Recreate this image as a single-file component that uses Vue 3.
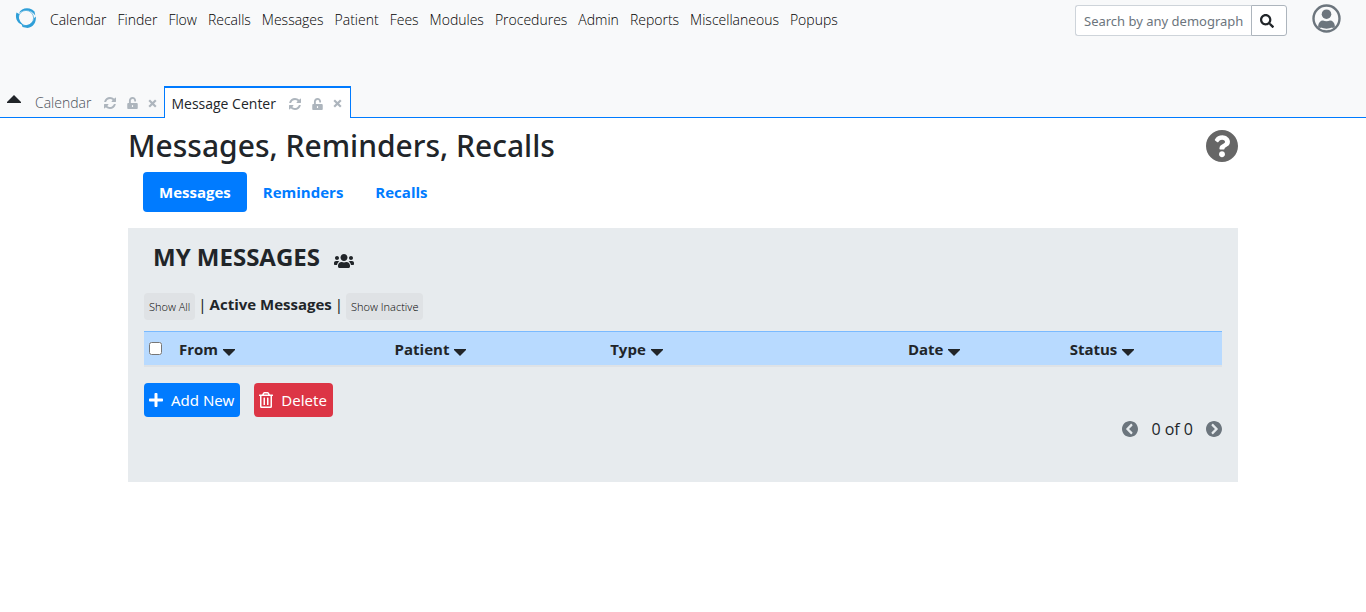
<script setup>
import { ref } from 'vue'

const menu = ['Calendar', 'Finder', 'Flow', 'Recalls', 'Messages', 'Patient', 'Fees', 'Modules', 'Procedures', 'Admin', 'Reports', 'Miscellaneous', 'Popups']
const tabs = [
  { title: 'Calendar', active: false },
  { title: 'Message Center', active: true },
]
const pills = ['Messages', 'Reminders', 'Recalls']
const activePill = ref('Messages')
const columns = [
  { title: 'From', key: 'from' },
  { title: 'Patient', key: 'patient' },
  { title: 'Type', key: 'type' },
  { title: 'Date', key: 'date' },
  { title: 'Status', key: 'status' },
]
const query = ref('')
</script>

<template>
  <div class="page">
    <header class="top">
      <nav class="menu" aria-label="Main">
        <a class="logo" href="#" aria-label="Home">
          <svg width="22" height="22" viewBox="0 0 22 22" aria-hidden="true">
            <circle cx="11" cy="11" r="7.6" fill="none" stroke="#74bfe5" stroke-width="1" />
            <path d="M4 6C6 1.500 12 0 17 2.500L19.500 4.500L20.300 8.500C17.500 4 12 1.600 7 4.200Z" fill="#2f9fd8" />
            <path d="M1.500 5.500C-.5 12 3 17.500 9 18.200C4.700 15 3 11.500 4.200 7Z" fill="#2f9fd8" />
            <path d="M20.800 9.500C21.500 15.500 18 20.500 12.500 21L7.500 20L6.800 17.800C12.500 19.600 18 16.500 19.200 11Z" fill="#2f9fd8" />
          </svg>
        </a>
        <a v-for="item in menu" :key="item" href="#">{{ item }}</a>
      </nav>
      <div class="tools">
        <form class="search" @submit.prevent>
          <input v-model="query" type="text" placeholder="Search by any demographics" aria-label="Search by any demographics" />
          <button type="submit" aria-label="Search">
            <svg width="14" height="14" viewBox="0 0 512 512" aria-hidden="true"><path fill="currentColor" d="M505 442.700L405.300 343c-4.500-4.500-10.600-7-17-7H372c27.600-35.300 44-79.700 44-128C416 93.100 322.900 0 208 0S0 93.100 0 208s93.100 208 208 208c48.300 0 92.700-16.400 128-44v16.300c0 6.400 2.500 12.500 7 17l99.700 99.700c9.400 9.400 24.600 9.400 33.900 0l28.300-28.300c9.400-9.400 9.400-24.600.1-34zM208 336c-70.700 0-128-57.200-128-128 0-70.700 57.200-128 128-128 70.700 0 128 57.200 128 128 0 70.700-57.200 128-128 128z" /></svg>
          </button>
        </form>
        <button class="user" type="button" aria-label="User">
          <svg width="29" height="29" viewBox="0 0 29 29" aria-hidden="true">
            <circle cx="14.500" cy="14.500" r="13" fill="none" stroke="currentColor" stroke-width="2.400" />
            <circle cx="14.500" cy="10.200" r="4.800" fill="currentColor" />
            <path d="M6 22.500C6.500 18.500 8.500 16.600 11 16.600C13 17.500 16 17.500 18 16.600C20.500 16.600 22.500 18.500 23 22.500C18.500 27 10.500 27 6 22.500Z" fill="currentColor" />
            <path d="M8.500 24.200Q14.500 26.500 20.500 24.200" fill="none" stroke="#f8f9fa" stroke-width="1.400" />
          </svg>
        </button>
      </div>
    </header>

    <div class="tabs">
      <button class="collapse" type="button" aria-label="Collapse">
        <svg width="14" height="8" viewBox="0 0 14 8" aria-hidden="true"><path d="M0 8V7L7 0L14 7V8Z" fill="currentColor" /></svg>
      </button>
      <div v-for="tab in tabs" :key="tab.title" class="tab" :class="{ active: tab.active }">
        <a href="#">{{ tab.title }}</a>
        <button type="button" aria-label="Refresh">
          <svg width="14" height="14" viewBox="0 0 1792 1792" aria-hidden="true"><path fill="currentColor" d="M1639 1056q0 5-1 7-64 268-268 434.500t-478 166.500q-146 0-282.500-55t-243.500-157l-129 129q-19 19-45 19t-45-19-19-45v-448q0-26 19-45t45-19h448q26 0 45 19t19 45-19 45l-137 137q71 66 161 102t187 36q134 0 250-65t186-179q11-17 53-117 8-23 30-23h192q13 0 22.500 9.500t9.500 22.500zm25-800v448q0 26-19 45t-45 19h-448q-26 0-45-19t-19-45 19-45l138-138q-148-137-349-137-134 0-250 65t-186 179q-11 17-53 117-8 23-30 23h-199q-13 0-22.500-9.500t-9.500-22.500v-7q65-268 270-434.500t480-166.500q146 0 284 55.500t245 156.500l130-129q19-19 45-19t45 19 19 45z" /></svg>
        </button>
        <button type="button" aria-label="Lock">
          <svg width="11" height="12" viewBox="0 0 448 512" aria-hidden="true"><path fill="currentColor" fill-rule="evenodd" d="M400 256H152V152.900c0-39.600 31.700-72.500 71.300-72.900 40-.4 72.700 32.100 72.700 72v16c0 13.300 10.700 24 24 24h32c13.300 0 24-10.700 24-24v-16C376 68 307.500-.3 223.500 0 139.500.3 72 69.500 72 153.500V256H48c-26.500 0-48 21.500-48 48v160c0 26.500 21.500 48 48 48h352c26.500 0 48-21.500 48-48V304c0-26.500-21.500-48-48-48zM250 402c0 14-11 26-26 26s-26-12-26-26v-36c0-14 11-26 26-26s26 12 26 26z" /></svg>
        </button>
        <button type="button" aria-label="Close">
          <svg width="9" height="9" viewBox="0 0 9 9" aria-hidden="true"><path d="M1.200 1.200L7.800 7.800M7.800 1.200L1.200 7.800" stroke="currentColor" stroke-width="2.200" /></svg>
        </button>
      </div>
    </div>

    <main class="container">
      <div class="heading">
        <h1>Messages, Reminders, Recalls</h1>
        <a href="#" aria-label="Help">
          <svg width="32" height="32" viewBox="8 8 496 496" aria-hidden="true"><path fill="currentColor" d="M504 256c0 136.997-111.043 248-248 248S8 392.997 8 256C8 119.083 119.043 8 256 8s248 111.083 248 248zM262.655 90c-54.497 0-89.255 22.957-116.549 63.758-3.536 5.286-2.353 12.415 2.715 16.258l34.699 26.310c5.205 3.947 12.621 3.008 16.665-2.122 17.864-22.658 30.113-35.797 57.303-35.797 20.429 0 45.698 13.148 45.698 32.958 0 14.976-12.363 22.667-32.534 33.976C247.128 238.528 216 254.941 216 296v4c0 6.627 5.373 12 12 12h56c6.627 0 12-5.373 12-12v-1.333c0-28.462 83.186-29.647 83.186-106.667 0-58.002-60.165-102-116.531-102zM256 338c-25.365 0-46 20.635-46 46 0 25.364 20.635 46 46 46s46-20.636 46-46c0-25.365-20.635-46-46-46z" /></svg>
        </a>
      </div>

      <nav class="pills" aria-label="Sections">
        <a v-for="pill in pills" :key="pill" href="#" :class="{ current: pill === activePill }" @click.prevent="activePill = pill">{{ pill }}</a>
      </nav>

      <section class="panel">
        <h2>
          <span>MY MESSAGES</span>
          <svg width="20" height="16" viewBox="0 0 640 512" aria-hidden="true"><path fill="currentColor" d="M96 224c35.300 0 64-28.700 64-64s-28.700-64-64-64-64 28.700-64 64 28.700 64 64 64zm448 0c35.300 0 64-28.700 64-64s-28.700-64-64-64-64 28.700-64 64 28.700 64 64 64zm32 32h-64c-17.600 0-33.500 7.100-45.100 18.600 40.300 22.100 68.900 62 75.100 109.400h66c17.700 0 32-14.300 32-32v-32c0-35.300-28.700-64-64-64zm-256 0c61.900 0 112-50.100 112-112S381.900 32 320 32 208 82.100 208 144s50.100 112 112 112zm76.800 32h-8.300c-20.800 10-43.900 16-68.500 16s-47.600-6-68.500-16h-8.300C179.600 288 128 339.600 128 403.200V432c0 26.500 21.500 48 48 48h288c26.500 0 48-21.500 48-48v-28.800c0-63.600-51.600-115.200-115.200-115.200zm-223.700-13.400C161.500 263.100 145.600 256 128 256H64c-35.300 0-64 28.700-64 64v32c0 17.700 14.300 32 32 32h65.900c6.300-47.400 34.900-87.300 75.200-109.400z" /></svg>
        </h2>

        <div class="filters">
          <button type="button">Show All</button>
          <span>|</span>
          <strong>Active Messages</strong>
          <span>|</span>
          <button type="button">Show Inactive</button>
        </div>

        <table>
          <thead>
            <tr>
              <th class="pick"><input type="checkbox" aria-label="Select all messages" /></th>
              <th v-for="col in columns" :key="col.key" :class="col.key">
                <a href="#">{{ col.title }}
                  <svg width="12" height="7" viewBox="0 0 12 7" aria-hidden="true"><path d="M0 0H12V1L6 7L0 1Z" fill="currentColor" /></svg>
                </a>
              </th>
            </tr>
          </thead>
        </table>

        <div class="actions">
          <button class="add" type="button">
            <svg width="14" height="16" viewBox="0 0 448 512" aria-hidden="true"><path fill="currentColor" d="M416 208H272V64c0-17.670-14.330-32-32-32h-32c-17.670 0-32 14.330-32 32v144H32c-17.670 0-32 14.330-32 32v32c0 17.670 14.330 32 32 32h144v144c0 17.670 14.330 32 32 32h32c17.670 0 32-14.330 32-32V304h144c17.670 0 32-14.330 32-32v-32c0-17.670-14.330-32-32-32z" /></svg>
            Add New
          </button>
          <button class="delete" type="button">
            <svg width="14" height="16" viewBox="0 0 448 512" aria-hidden="true"><path fill="currentColor" d="M268 416h24a12 12 0 0 0 12-12V188a12 12 0 0 0-12-12h-24a12 12 0 0 0-12 12v216a12 12 0 0 0 12 12zM432 80h-82.410l-34-56.700A48 48 0 0 0 274.410 0H173.590a48 48 0 0 0-41.160 23.300L98.410 80H16A16 16 0 0 0 0 96v16a16 16 0 0 0 16 16h16v336a48 48 0 0 0 48 48h288a48 48 0 0 0 48-48V128h16a16 16 0 0 0 16-16V96a16 16 0 0 0-16-16zM171.840 50.910A6 6 0 0 1 177 48h94a6 6 0 0 1 5.150 2.910L293.610 80H154.390zM368 464H80V128h288zm-212-48h24a12 12 0 0 0 12-12V188a12 12 0 0 0-12-12h-24a12 12 0 0 0-12 12v216a12 12 0 0 0 12 12z" /></svg>
            Delete
          </button>
        </div>

        <div class="pager">
          <button type="button" aria-label="Previous">
            <svg width="16" height="16" viewBox="8 8 496 496" aria-hidden="true"><path fill="currentColor" d="M256 504C119 504 8 393 8 256S119 8 256 8s248 111 248 248-111 248-248 248zM142.100 273l135.500 135.500c9.400 9.400 24.600 9.400 33.900 0l17-17c9.400-9.400 9.400-24.600 0-33.900L226.900 256l101.600-101.600c9.400-9.400 9.400-24.600 0-33.900l-17-17c-9.400-9.400-24.600-9.400-33.900 0L142.100 239c-9.400 9.400-9.400 24.600 0 34z" /></svg>
          </button>
          <span>0 of 0</span>
          <button type="button" aria-label="Next">
            <svg width="16" height="16" viewBox="8 8 496 496" aria-hidden="true"><path fill="currentColor" transform="matrix(-1 0 0 1 512 0)" d="M256 504C119 504 8 393 8 256S119 8 256 8s248 111 248 248-111 248-248 248zM142.100 273l135.500 135.500c9.400 9.400 24.600 9.400 33.900 0l17-17c9.400-9.400 9.400-24.600 0-33.900L226.900 256l101.600-101.600c9.400-9.400 9.400-24.600 0-33.900l-17-17c-9.400-9.400-24.600-9.400-33.900 0L142.100 239c-9.400 9.400-9.400 24.600 0 34z" /></svg>
          </button>
        </div>
      </section>
    </main>
  </div>
</template>

<style>
body {
  margin: 0;
  background: #fff;
}
</style>

<style scoped>
.page {
  font-family: "Noto Sans", "Open Sans", sans-serif;
  font-size: 15px;
  line-height: 24px;
  color: #212529;
}
.page * {
  box-sizing: border-box;
}
a {
  color: inherit;
  text-decoration: none;
}
button {
  display: inline-flex;
  align-items: center;
  padding: 0;
  border: 0;
  background: none;
  color: inherit;
  font: inherit;
  cursor: pointer;
}
svg {
  display: block;
  flex: none;
}
.menu,
.tabs,
.filters button,
.pager,
.pills,
h2,
strong,
th {
  font-family: "Open Sans", "Noto Sans", sans-serif;
}
.top {
  display: flex;
  justify-content: space-between;
  height: 86px;
  padding: 4px 25px 0 15px;
  background: #f8f9fa;
}
.menu {
  display: flex;
  align-items: center;
  gap: 11px;
  height: 32px;
  font-size: 14px;
  font-weight: 300;
  color: #000;
}
.logo {
  align-self: flex-start;
  margin: 3px 2px 0 0;
}
.tools {
  display: flex;
  align-items: flex-start;
  gap: 25px;
}
.search {
  display: flex;
  height: 31px;
  margin-top: 1px;
}
.search input {
  width: 176px;
  padding: 0 8px;
  border: 1px solid #ced4da;
  border-right: 0;
  border-radius: 3px 0 0 3px;
  background: #fff;
  color: #495057;
  font: inherit;
  font-size: 13px;
}
.search input::placeholder {
  color: #6c757d;
  opacity: 1;
}
.search button {
  justify-content: center;
  width: 36px;
  padding-right: 4px;
  border: 1px solid #adb5bd;
  border-radius: 0 3px 3px 0;
  background: #fff;
}
.user {
  color: #6c757d;
}
.tabs {
  display: flex;
  height: 32px;
  padding-left: 7px;
  border-bottom: 1px solid #007bff;
  background: #f8f9fa;
}
.collapse {
  align-self: flex-start;
  margin: 9px 7px 0 0;
}
.tab {
  display: flex;
  align-items: center;
  height: 31px;
  padding: 3px 7px 0;
  color: #495057;
  font-size: 14px;
  font-weight: 300;
}
.tab.active {
  height: 32px;
  padding: 1px 8px 0 6px;
  border: 1px solid #007bff;
  border-top-width: 2px;
  border-bottom: 0;
  background: #fff;
  color: #212529;
  font-weight: 500;
}
.tab button {
  margin-left: 10px;
  color: #adb5bd;
}
.tab a + button {
  margin-left: 12px;
}
.container {
  max-width: 1140px;
  margin: 0 auto;
  padding: 9px 15px 0;
}
.heading {
  display: flex;
  justify-content: space-between;
  align-items: center;
  height: 38px;
}
.heading a {
  color: #666;
}
h1 {
  margin: 0;
  font-size: 30px;
  font-weight: 500;
  line-height: 38px;
}
h2,
strong,
th,
.pills {
  font-weight: 700;
}
.pills {
  display: flex;
  margin: 7px 15px 16px;
}
.pills a {
  padding: 8px 16px;
  border-radius: 4px;
  color: #007bff;
}
.pills .current {
  background: #007bff;
  color: #fff;
}
.panel {
  padding: 14px 16px 41px;
  background: #e7ebee;
}
h2 {
  display: flex;
  align-items: center;
  gap: 14px;
  margin: 0 0 18px 9px;
  font-size: 24px;
  line-height: 30px;
}
h2 svg {
  margin-top: 8px;
}
.filters {
  display: flex;
  align-items: flex-start;
  gap: 3px;
}
.filters button {
  height: 27px;
  margin-top: 3px;
  padding: 0 5px;
  border-radius: 4px;
  background: #dfe2e5;
  color: #000;
  font-size: 11px;
  font-weight: 300;
}
.filters span,
.filters strong {
  margin-top: 2px;
}
table {
  width: 100%;
  margin-top: 11px;
  border-collapse: collapse;
  table-layout: fixed;
}
tr {
  border-top: 1px solid #7abaff;
  border-bottom: 2px solid #dee2e6;
  background: #b8daff;
}
th {
  height: 34px;
  padding: 2px 5px 0;
  text-align: left;
  line-height: 24px;
}
th a {
  display: inline-flex;
  align-items: center;
  gap: 5px;
}
th svg {
  margin-top: 7px;
}
th input {
  display: block;
  width: 13px;
  height: 13px;
  margin: 0 0 2px;
}
.pick {
  width: 30px;
}
.from,
.patient {
  width: 20%;
}
.date {
  width: 15%;
}
.status {
  width: 14.6%;
}
.actions {
  display: flex;
  gap: 14px;
  margin-top: 16px;
}
.actions button {
  gap: 8px;
  height: 34px;
  padding: 0 6px 0 5px;
  border-radius: 4px;
  color: #fff;
}
.add {
  background: #007bff;
}
.delete {
  background: #dc3545;
}
.pager {
  display: flex;
  align-items: center;
  justify-content: flex-end;
  gap: 13px;
  font-size: 16px;
}
.pager button {
  color: #6c757d;
}
</style>
